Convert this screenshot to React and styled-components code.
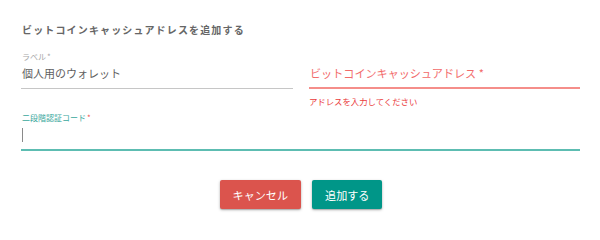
import React from "react";
import styled, { createGlobalStyle } from "styled-components";

const GlobalStyle = createGlobalStyle`
  body {
    margin: 0;
    background: #fff;
    font-family: "Noto Sans CJK JP", "Noto Sans", sans-serif;
  }
`;

const Dialog = styled.div`
  width: 600px;
  height: 229px;
  box-sizing: border-box;
  padding: 22px 20px 0 21px;
`;

const Title = styled.h3`
  margin: 0 0 0 1px;
  font-size: 10px;
  line-height: 16px;
  font-weight: 700;
  letter-spacing: 1.15px;
  color: #666;
`;

const Row = styled.div`
  display: grid;
  grid-template-columns: 272px 271px;
  column-gap: 16px;
  margin-top: 13px;
`;

const Field = styled.div`
  display: flex;
  flex-direction: column;
  margin-top: ${(p) => p.gap || 0}px;
`;

const Label = styled.label`
  height: 12px;
  font-size: 8px;
  line-height: 12px;
  padding-left: 1px;
  color: ${(p) => (p.focused ? "#3aa89d" : "#a8a8a8")};
  span {
    margin-left: 1px;
    color: ${(p) => (p.focused ? "#ef5350" : "#a8a8a8")};
  }
`;

const Input = styled.div`
  height: ${(p) => p.h || 24}px;
  display: flex;
  align-items: flex-start;
  padding: ${(p) => p.pt || 2}px 0 0 1px;
  box-sizing: border-box;
  line-height: 16px;
  font-size: ${(p) => (p.placeholder ? 11.1 : 11)}px;
  color: ${(p) => (p.error ? "#f26b6b" : "#5f5f5f")};
  border-bottom: ${(p) =>
    p.error
      ? "2px solid #f58e8a"
      : p.focused
      ? "2px solid #5dbdb2"
      : "1.5px solid #c6c6c6"};
`;

const Caret = styled.i`
  display: block;
  width: 1px;
  height: 14px;
  background: #8a8a8a;
`;

const Helper = styled.div`
  margin-top: 6px;
  font-size: 8.4px;
  line-height: 12px;
  color: #ea3b3b;
`;

const Actions = styled.div`
  display: flex;
  justify-content: center;
  gap: 11px;
  margin-top: 29px;
  padding-left: 1px;
`;

const Button = styled.button`
  height: 29px;
  padding: 0 13px;
  border: none;
  border-radius: 2px;
  font-family: inherit;
  font-size: 11.1px;
  color: #fff;
  background: ${(p) => (p.danger ? "#db544d" : "#009688")};
  box-shadow: 0 1px 3px rgba(0, 0, 0, 0.28), 0 1px 1px rgba(0, 0, 0, 0.14);
  cursor: pointer;
`;

export default function App() {
  return (
    <>
      <GlobalStyle />
      <Dialog>
        <Title>ビットコインキャッシュアドレスを追加する</Title>
        <Row>
          <Field>
            <Label>
              ラベル<span>*</span>
            </Label>
            <Input h={25.5}>個人用のウォレット</Input>
          </Field>
          <Field>
            <Label />
            <Input error placeholder h={26}>
              ビットコインキャッシュアドレス *
            </Input>
            <Helper>アドレスを入力してください</Helper>
          </Field>
        </Row>
        <Field gap={5}>
          <Label focused>
            二段階認証コード<span>*</span>
          </Label>
          <Input focused h={27} pt={4}>
            <Caret />
          </Input>
        </Field>
        <Actions>
          <Button danger>キャンセル</Button>
          <Button>追加する</Button>
        </Actions>
      </Dialog>
    </>
  );
}
